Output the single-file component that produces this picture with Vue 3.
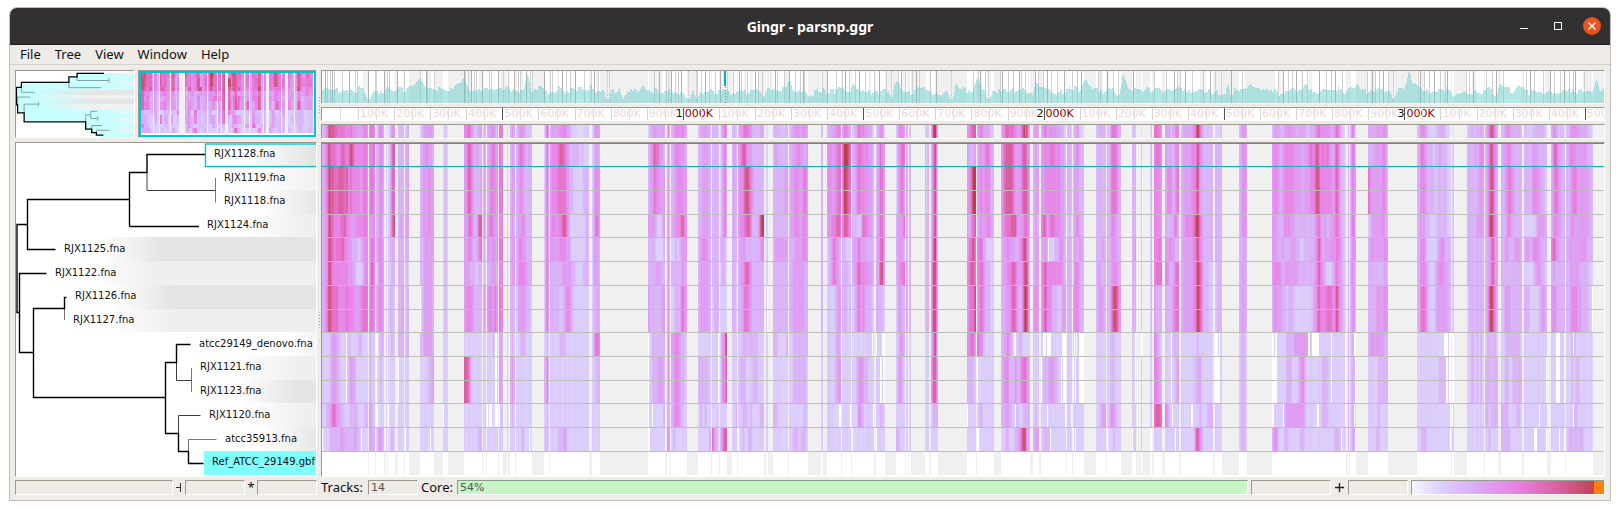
<script setup>
import { ref, onMounted } from 'vue'

const SPAN = 1282
const TRACKS = 14

// Aligned blocks: start, end, then SNP density samples (1 = sparse, 9 = dense) for
// each distinct group of tracks listed in `groups`.
const blocks = `
0 46 34586665567656875555565 34587766777675655554565 34487655566755444555565 34487656667554433323455 34487555555554443222355 34587666555565554445666 22223443322223222233222 22223443322223443222222 22334664433222333322233 12223333344333334332222
47 53 556 565 445 465 475 565 322 322 432 433
54 62 3454 3454 3453 3554 2454 3554 1233 1232 1122 2443
64 65 2 2 2 2 2 2 2 2 2 2
66 73 23577 23576 23578 23343 22333 23332 22332 12222 12222 12332
76 82 333 333 343 333 333 334 333 222 222 222
83 87 334 334 344 333 232 233 233 222 222 122
98 112 3445443 3444544 3444544 3344444 3344443 2344443 3344443 2222334 2 2
121 126 232 232 232 232 232 232 2 2 2 2
142 160 457643433 457643334 446643377 445533356 444333233 455543333 2 776322222 2 222222233
161 164 343 343 343 242 232 343 2 2 2 2
165 176 345654 346554 456544 444544 334443 455464 222321 2 112112 2
177 181 655 656 555 656 555 655 343 443 232 2
185 186 2 2 2 2 2 2 2 2 2 2
188 193 343 344 343 344 344 333 232 343 232 222
194 210 35654343 34543333 34454333 35544333 35555433 24444332 12333222 2 2 22232221
222 227 2464 2464 2464 2464 2464 2464 2232 3363 2232 2332
228 267 45556776543333323222 45556666543322222333 45545577642222222233 44444555443222222233 33333344444332222333 33333233554322222222 22222333222222222222 2 2 22223334322222222222
270 278 23443 24554 24664 24443 24443 23343 24665 22333 2 2
326 343 345766443 344655444 444432234 333322223 333344433 433333344 123333333 223334443 222222223 122222222
345 348 343 343 343 343 343 343 343 343 333 444
349 365 34555443 33455544 34455764 22323444 33333443 22333654 44554332 34554332 34554322 23222222
376 389 334443 334443 334443 345543 344443 344443 2 333332 232322 222223
390 397 3333 3333 3333 3333 3333 2333 2 2 2 6432
398 405 23464 23464 23464 33332 23332 2 24468 24557 2 34677
410 415 3443 3433 3433 3333 3332 3332 2 2 2223 2
416 442 4577544333333 4557875433333 4556775333489 3444333333345 3446764333333 3346654333333 2233333333222 2333222333222 2233323222233 1232233222222
444 446 2 2 2 2 2 2 2 2 2 2
451 466 3433333 3333344 3333333 3444444 3333333 3333333 3322223 2 3322222 2
467 486 3344554434 3445544564 3445544554 3334444554 3344444433 3344444433 2233333333 2233333332 2222222232 2233323332
499 501 3 3 3 3 3 3 2 2 2 2
505 519 4544566 4544566 4455676 2346543 2346543 2222344 2222343 2222344 2222211 2
520 529 69986 59876 57765 33222 33332 33323 2 2 2 2
530 552 34566555443 33565554443 33323665443 34464443333 34575554443 23464543332 12222222222 22345433222 22254322222 12222222222
554 563 34654 34664 34664 34674 34784 33332 2 2 22332 2
574 583 24566 24564 34446 34443 34556 24433 23443 24432 2 33222
584 586 43 43 43 33 43 43 2 2 2 2
587 589 33 33 33 33 33 33 2 2 2 2
603 607 323 323 333 333 333 333 2 2 2 2
609 616 3683 3683 3683 3793 4884 4884 3683 4774 2333 2
645 654 43334 45699 43567 46686 56776 46668 55664 33332 2 2
655 672 354456543 455455533 354445543 566432222 566533322 466533322 655322222 2 233222222 122222222
679 708 467777644457764 467777644457774 456667774445664 344544433457863 344556764446883 334446764336984 334543222332222 345533343356653 334433223223333 223322233468843
711 717 343 344 343 344 344 454 2 2 232 344
719 744 4555566555443 4455555555443 5764566555443 3443222334543 5675555555543 4675543332344 2 2333444332222 2 2333322222222
745 750 333 333 232 333 333 333 2 2 2 2
751 762 345433 344333 345433 343443 355433 455433 2 2 2 2
774 784 33333 33333 33333 33343 34333 34443 2 2 22344 2
785 799 3366643 3366643 3355433 3345433 3345543 3368864 2233222 2233222 2354322 1223222
810 814 33 33 33 34 33 33 2 2 2 2
819 820 2 2 2 2 2 2 2 2 2 2
828 830 23 23 23 23 23 23 2 2 2 2
832 840 5665 5554 5554 5565 5666 4333 5432 5543 6776 2
843 857 4343355 3554356 3333463 4454433 5533466 3333566 2222333 2222234 5422222 2
859 891 3444455585433333 3444455684333333 3455556896433333 3444445685433333 3444445697533322 3444445697533322 2222222232222222 2222222334222222 2211222223222333 2222222675322222
893 900 3333 3333 3333 3333 2333 2333 2 2 2 2
917 925 3454 3454 3454 3343 3443 3443 2332 2332 2332 2332
950 1024 4554345555544443445656865656543575332 4554345555544443444556875555554575332 4443335454433333333334564343344565332 4443343334443322333334575344445465432 4555434444444333333334575432223464432 3544433233322222222234575556665585432 2222222333344444443222222222222222222 2222222333222345322222222333222222222 2222223444444444322222222333222222222 3542223322222233222222222222222333222
1026 1027 3 3 3 3 3 3 3 3 3 3
1028 1034 3563 3554 3563 3454 3543 3453 2332 2333 2332 2343
1046 1066 3334444553 6444444553 2344444543 3444444454 3333333343 3333444454 3444444433 2222233333 2222232222 2222332222
1095 1129 34654333233433322 34554333323333322 34443322223333322 34553222223454333 34554322234554433 34665322234444433 2 22222222222333222 2 22333222222222222
1130 1132 2 2 2 2 2 2 2 2 2 2
1145 1162 333343455 333333444 333334444 333333333 333333333 233333333 223323232 223323232 2 2
1163 1176 3468654 3468743 3479754 3346744 3346744 3479753 2333332 3333333 3323333 2232222
1179 1200 34455433333 33456543333 33355433333 33443334443 33333333333 23444333333 22333333332 22332233333 33332222332 33333222222
1202 1225 333344433333 333345544332 222222344443 344345544333 222223444332 333222223443 2 2 2 2
1229 1243 3674433 3565433 3554433 5754333 3433333 4543333 2 2 2 2
1244 1271 34555444444333 33456544444433 33454444444433 34444444444333 33444443333322 33455544333322 22233222222222 22232332222222 22223322222222 23333333322222
`.trim().split('\n').map((line) => {
  const [start, end, ...samples] = line.split(' ')
  return { start: +start, end: +end, samples }
})

// Which sample group every track uses; the last track is the reference itself.
const groups = [0, 1, 1, 2, 3, 4, 5, 5, 6, 7, 7, 8, 9]

// Unaligned stretches inside blocks, per group: start:width
const holes = {
  1: '820:1', 2: '820:1', 3: '726:1', 5: '98:1 445:1 1270:1',
  6: '24:1 54:2 173:2 326:1 396:1 550:1 554:1 560:3 692:2 721:3 725:4 740:4 752:1 754:1 757:5 813:1 819:2 849:1 893:3 897:1 950:2 953:2 986:2 990:7 1009:1 1023:1 1032:2 1122:4 1127:2 1130:2 1234:4 1242:1 1251:1',
  7: '24:1 54:1 76:1 173:2 326:1 396:1 558:2 561:2 655:1 719:1 739:1 741:3 751:1 753:1 757:5 813:1 849:1 893:5 950:5 1009:1 1023:1 1033:1 1124:2 1127:2 1130:2 1224:1 1234:4 1242:1',
  8: '54:2 66:1 121:1 165:1 167:3 173:3 177:1 326:1 330:1 517:2 528:1 551:1 645:1 693:1 725:1 743:1 749:1 850:1 869:2 950:2 961:1 995:2 1023:1 1032:1 1128:1 1130:1 1217:1 1251:1',
  9: '0:1 39:1 83:1 108:1 207:1 326:2 416:1 530:1 554:1 655:2 728:1 751:1 753:1 785:1 810:1 828:2 853:1 1019:1 1033:1 1128:1 1212:3 1224:1 1237:1 1242:1'
}

const palette = [
  [255, 255, 255], [230, 224, 253], [220, 206, 251], [218, 180, 247], [222, 158, 242],
  [232, 136, 234], [229, 116, 206], [218, 96, 160], [204, 80, 112], [185, 64, 66]
]

function shade(level) {
  const v = Math.max(0, Math.min(9, level))
  const i = Math.min(8, Math.floor(v))
  const c = palette[i].map((a, k) => Math.round(a + (palette[i + 1][k] - a) * (v - i)))
  return `rgb(${c.join(',')})`
}

const noise = (n) => {
  const s = Math.sin(n * 127.1 + 11.7) * 43758.5453
  return s - Math.floor(s)
}

function buildLevels() {
  const rows = Array.from({ length: 10 }, () => new Array(SPAN).fill(-1))
  for (const b of blocks) {
    const width = b.end - b.start
    b.samples.forEach((text, g) => {
      for (let i = 0; i < width; i++) {
        const p = Math.max(0, Math.min(text.length - 1, ((i + 0.5) / width) * text.length - 0.5))
        const a = Math.floor(p)
        const z = Math.min(text.length - 1, a + 1)
        const v = +text[a] + (text[z] - text[a]) * (p - a)
        rows[g][b.start + i] = Math.max(1.6, v + (noise(b.start + i) - 0.5) * 0.4)
      }
    })
  }
  for (const [g, list] of Object.entries(holes)) {
    for (const item of list.split(' ')) {
      const [x, w] = item.split(':').map(Number)
      for (let i = x; i < x + w; i++) rows[g][i] = 0
    }
  }
  return rows
}

const levels = buildLevels()
const inBlock = Array.from({ length: SPAN }, (_, x) => blocks.some((b) => x >= b.start && x < b.end))

const heat = ref(null)
const strip = ref(null)
const thumb = ref(null)
const density = ref(null)

function paintHeat(canvas) {
  const c = canvas.getContext('2d')
  const pitch = 332 / TRACKS
  c.fillStyle = '#f0f0f0'
  c.fillRect(0, 0, SPAN, 333)
  groups.forEach((g, row) => {
    const y = Math.floor(row * pitch)
    for (let x = 0; x < SPAN; x++) {
      if (levels[g][x] < 0) continue
      c.fillStyle = shade(levels[g][x])
      c.fillRect(x, y, 1, 24)
    }
  })
  c.fillStyle = '#fff'
  for (let x = 0; x < SPAN; x++) if (inBlock[x]) c.fillRect(x, 308, 1, 25)
  c.fillRect(0, 332, SPAN, 1)
  c.fillStyle = '#bdbdbd'
  for (let i = 2; i < TRACKS; i++) c.fillRect(0, Math.floor(i * pitch), SPAN, 1)
  c.fillStyle = '#00b9b9'
  c.fillRect(0, 0, SPAN, 1)
  c.fillRect(0, 23, SPAN, 1)
}

function paintStrip(canvas) {
  const c = canvas.getContext('2d')
  c.fillStyle = '#f0f0f0'
  c.fillRect(0, 0, SPAN, 13)
  for (let x = 0; x < SPAN; x++) {
    if (!inBlock[x]) continue
    const mean = groups.reduce((sum, g) => sum + Math.max(0, levels[g][x]), 0) / groups.length
    c.fillStyle = shade(mean * 1.6 - 1.6)
    c.fillRect(x, 0, 1, 13)
  }
  c.fillStyle = '#ff8000'
  c.fillRect(703, 0, 1, 13)
}

function paintThumb(canvas) {
  const c = canvas.getContext('2d')
  c.fillStyle = '#fff'
  c.fillRect(0, 0, 173, 62)
  for (let x = 0; x < 173; x++) {
    const from = Math.floor((x * SPAN) / 173)
    const to = Math.floor(((x + 1) * SPAN) / 173)
    if (!inBlock.slice(from, to).some(Boolean)) {
      c.fillStyle = '#f0f0f0'
      c.fillRect(x, 0, 1, 62)
      continue
    }
    groups.forEach((g, row) => {
      const part = levels[g].slice(Math.max(0, from - 6), to + 6).filter((v) => v > 0)
      const mean = part.length ? part.reduce((a, b) => a + b, 0) / part.length : 2
      const top = part.length ? Math.max(...part) : 2
      const y = Math.round((row * 60) / 13)
      c.fillStyle = shade((mean + top) / 2 + (row < 4 ? 0.9 : 0))
      c.fillRect(x, y, 1, Math.round(((row + 1) * 60) / 13) - y)
    })
  }
}

const edges = [
  3, 5, 8, 10, 12, 20, 27, 33, 35, 46, 53, 54, 62, 65, 67, 75, 82, 98, 104, 105, 112, 142, 143, 146, 149, 152, 154, 160, 167, 169,
  176, 181, 186, 192, 196, 198, 204, 208, 210, 222, 228, 230, 240, 244, 248, 253, 262, 269, 272, 276, 332, 337, 344, 346, 349,
  353, 356, 359, 375, 379, 383, 387, 393, 398, 405, 411, 417, 419, 425, 433, 436, 440, 453, 455, 462, 467, 473, 478, 481, 482,
  500, 505, 514, 520, 523, 527, 533, 537, 543, 552, 557, 564, 576, 579, 583, 590, 594, 597, 608, 614, 651, 656, 658, 663, 678,
  680, 686, 691, 697, 699, 703, 713, 716, 721, 725, 729, 735, 742, 750, 755, 759, 776, 778, 785, 791, 796, 811, 832, 844, 852,
  855, 858, 863, 870, 881, 888, 893, 899, 909, 920, 956, 961, 966, 970, 974, 980, 985, 997, 1004, 1009, 1013, 1020, 1045, 1050,
  1053, 1057, 1061, 1066, 1096, 1098, 1102, 1107, 1112, 1118, 1123, 1125, 1144, 1147, 1151, 1164, 1170, 1174, 1181, 1204, 1208,
  1212, 1221, 1228, 1232, 1238, 1242, 1247, 1251, 1253, 1262
]
const breaks = [285, 287, 366, 374, 569, 629, 666, 1071]

// Notable peaks and dips of the density curve: position, height, half width.
const features = [
  [97, 24, 8], [88, 18, 5], [141, 25, 6], [136, 20, 4], [205, 28, 4], [185, 18, 4], [321, 18, 4], [467, 24, 3], [531, 20, 3], [575, 22, 6],
  [634, 20, 3], [655, 25, 5], [714, 20, 3], [763, 24, 6], [801, 28, 5], [906, 19, 3], [928, 19, 5], [983, 19, 4], [1035, 19, 4],
  [1087, 32, 5], [1093, 20, 6], [1178, 19, 4], [1196, 18, 4], [1274, 23, 4], [285, 2, 4], [366, 3, 5], [374, 4, 4], [569, 4, 3],
  [629, 2, 4], [666, 3, 4], [46, 3, 5], [301, 4, 4], [1071, 3, 4], [441, 6, 4], [486, 6, 4], [1131, 6, 4], [795, 7, 5], [909, 6, 3]
]

function paintDensity(canvas) {
  const c = canvas.getContext('2d')
  c.fillStyle = '#f0f0f0'
  c.fillRect(0, 0, SPAN, 32)
  c.fillStyle = '#fff'
  for (const b of blocks) c.fillRect(b.start, 0, b.end - b.start, 32)
  c.fillStyle = 'rgba(240,240,240,0.9)'
  for (let i = 0; i < 90; i++) {
    c.fillRect(Math.floor(noise(i) * SPAN), 0, 1 + Math.floor(noise(i + 300) * 5), 32)
  }
  edges.forEach((x, i) => {
    c.fillStyle = i % 3 ? '#d0d0d0' : '#b0b0b0'
    c.fillRect(x, 0, 1, 32)
  })
  c.fillStyle = '#b8b8b8'
  for (const x of breaks) for (let y = 0; y < 32; y += 2) c.fillRect(x, y, 1, 1)
  for (let x = 0; x < SPAN; x++) {
    const coarse = noise(Math.floor(x / 9)) * 5
    const mid = noise(Math.floor(x / 4) + 50) * 5
    let h = 6 + coarse + mid + noise(Math.floor(x / 2) + 900) * 3
    for (const [at, height, half] of features) {
      const k = 1 - Math.abs(x - at) / half
      if (k > 0) h += (height - h) * Math.min(1, k * 1.1)
    }
    c.fillStyle = 'rgba(104,205,201,0.5)'
    c.fillRect(x, 32 - Math.round(h), 1, Math.round(h))
  }
  c.fillStyle = '#00b4b4'
  c.fillRect(402, 0, 2, 15)
  c.fillStyle = '#5f8f8f'
  for (let y = 16; y < 32; y += 3) c.fillRect(403, y, 1, 1)
}

onMounted(() => {
  paintHeat(heat.value)
  paintStrip(strip.value)
  paintThumb(thumb.value)
  paintDensity(density.value)
})

const kilobase = 36.08
const ticks = Array.from({ length: 35 }, (_, i) => {
  const n = i + 1
  return {
    n,
    left: `${((n * kilobase) / SPAN) * 100}%`,
    mega: n % 10 === 0 ? n / 10 : 0,
    dark: n % 5 === 0,
    label: n % 10 === 0 ? '000K' : `${n % 10}00K`
  }
})
const halves = Array.from({ length: 35 }, (_, i) => `${(((i + 0.5) * kilobase) / SPAN) * 100}%`)

const pitch = 332 / TRACKS
const leaves = [
  ['RJX1128.fna', 198], ['RJX1119.fna', 208], ['RJX1118.fna', 208], ['RJX1124.fna', 191], ['RJX1125.fna', 48],
  ['RJX1122.fna', 39], ['RJX1126.fna', 59], ['RJX1127.fna', 57], ['atcc29149_denovo.fna', 183], ['RJX1121.fna', 184],
  ['RJX1123.fna', 184], ['RJX1120.fna', 193], ['atcc35913.fna', 209], ['Ref_ATCC_29149.gbf', 196]
].map(([name, x], i) => ({
  name,
  x,
  y: Math.floor(i * pitch),
  baseline: Math.round(i * pitch) + 14,
  fade: x + (name.length > 15 ? 92 : 36),
  tone: i % 2 ? '#efefef' : '#e4e4e4'
}))

const thick = 'M189 11.5H131V30 M113.5 83.5V29.5H131 M183 83.5H113.5 M113.5 56.5H11.5V106.5H39.5 M11.5 81.5H1V169.5H3.5 M30.5 130.5H3.5V209.5H17.5 M50.5 154.5H48.5V165.5H17.5V254.5H149.5 M174.5 201.5H160.5V219.5H149.5V290.5H162.5V308.5H172.5V320.5H187.5'
const thin = 'M131 29V47.5H199.5 M160.5 219V237.5H175.5 M162.5 290V272.5H184.5'
const faint = 'M199.5 35V59.5 M48.5 165V177 M175.5 225V249 M172.5 308V296.5H200.5'
const trunk = 'M189 11.5H131V29.5H113.5V56.5H11.5V81.5H1V169.5H3.5V209.5H17.5V254.5H149.5V290.5H162.5V308.5H172.5V320.5H187.5'
const twigs = thin + faint + 'M113.5 56.5V83.5H183 M11.5 81.5V106.5H39.5 M3.5 169.5V130.5H30.5 M17.5 209.5V165.5H48.5V154.5 M149.5 254.5V219.5H160.5V201.5H174.5'
const menus = ['File', 'Tree', 'View', 'Window', 'Help']
</script>

<template>
  <div class="desktop">
    <main class="window">
      <header class="titlebar">
        <h1>Gingr - parsnp.ggr</h1>
        <div class="controls">
          <button type="button" aria-label="Minimize"><svg viewBox="0 0 18 18"><path d="M5 11.5H13" stroke="#fff" /></svg></button>
          <button type="button" aria-label="Maximize"><svg viewBox="0 0 18 18"><rect x="5.5" y="5.5" width="7" height="7" fill="none" stroke="#fff" /></svg></button>
          <button type="button" aria-label="Close"><svg viewBox="0 0 18 18"><circle cx="9" cy="9" r="9" fill="#e95420" /><path d="M5.5 5.5L12.5 12.5M12.5 5.5L5.5 12.5" stroke="#fff" stroke-width="1.4" /></svg></button>
        </div>
      </header>
      <nav class="menubar">
        <button v-for="m in menus" :key="m" type="button">{{ m }}</button>
      </nav>

      <section class="workspace">
        <div class="thumbs">
          <div class="panel tree-thumb">
            <svg viewBox="0 0 118 66" preserveAspectRatio="none">
              <defs>
                <linearGradient id="grayFade"><stop offset="0" stop-color="#e6e6e6" stop-opacity="0" /><stop offset="0.6" stop-color="#e6e6e6" /></linearGradient>
                <linearGradient id="paleGrayFade"><stop offset="0" stop-color="#f0f0f0" stop-opacity="0" /><stop offset="0.6" stop-color="#f0f0f0" /></linearGradient>
                <linearGradient id="paleFade"><stop offset="0" stop-color="#f0f0f0" stop-opacity="0" /><stop offset="1" stop-color="#f0f4f4" stop-opacity="0.8" /></linearGradient>
              </defs>
              <path d="M1 16H5V10H54V6H61V2H118V66H82V63H76V59H69V50H9V42H2Z" fill="#c8ffff" />
              <rect v-for="i in 7" :key="i" x="88" :y="(i * 2 - 2) * 4.7" width="30" height="4.7" fill="url(#paleFade)" />
              <rect x="14" y="19" width="104" height="5" fill="url(#grayFade)" />
              <rect x="14" y="24" width="104" height="5" fill="url(#paleGrayFade)" />
              <rect x="20" y="28" width="98" height="5" fill="url(#grayFade)" />
              <rect x="20" y="33" width="98" height="5" fill="url(#paleGrayFade)" />
              <g fill="none" class="mini">
                <path :d="twigs" stroke="#7fa3a3" />
                <path :d="trunk" stroke="#000" stroke-width="1.3" />
              </g>
            </svg>
          </div>
          <div class="panel heat-thumb"><canvas ref="thumb" width="173" height="62"></canvas></div>
        </div>
        <div class="splitter"><i></i></div>
        <div class="tracks-head">
          <div class="panel density"><canvas ref="density" width="1282" height="32"></canvas></div>
          <div class="panel ruler">
            <template v-for="t in ticks" :key="t.n">
              <span class="tick" :class="{ dark: t.dark }" :style="{ left: t.left }"></span>
              <span v-if="t.mega" class="mega" :style="{ left: t.left }">{{ t.mega }}</span>
              <span class="label" :class="{ red: t.mega }" :style="{ left: t.left }">{{ t.label }}</span>
            </template>
            <span v-for="h in halves" :key="h" class="tick half" :style="{ left: h }"></span>
          </div>
          <div class="panel strip"><canvas ref="strip" width="1282" height="13"></canvas></div>
        </div>

        <div class="panel tree">
          <svg viewBox="0 0 300 333" preserveAspectRatio="xMinYMin meet">
            <defs>
              <linearGradient v-for="(l, i) in leaves" :id="'row' + i" :key="i" gradientUnits="userSpaceOnUse" :x1="l.fade" :x2="l.fade + 62" y1="0" y2="0">
                <stop offset="0" stop-color="#fff" /><stop offset="1" :stop-color="l.tone" />
              </linearGradient>
            </defs>
            <rect v-for="(l, i) in leaves" :key="l.name" x="0" :y="l.y" width="300" height="24" :fill="`url(#row${i})`" />
            <rect x="0" y="332" width="300" height="1" fill="#fff" />
            <rect x="188" y="308" width="112" height="24" fill="#80ffff" />
            <rect x="189.5" y="1" width="114" height="22.5" fill="none" stroke="#9be8e8" stroke-width="2" />
            <rect x="189.5" y="1" width="114" height="22.5" fill="none" stroke="#00c4c4" />
            <g fill="none">
              <path :d="faint" stroke="#777" />
              <path :d="thin" stroke="#3c3c3c" />
              <path :d="thick" stroke="#000" stroke-width="1.4" />
            </g>
            <text v-for="l in leaves" :key="l.name" :x="l.x" :y="l.baseline">{{ l.name }}</text>
          </svg>
        </div>
        <div class="splitter low"><i></i></div>
        <div class="panel heat"><canvas ref="heat" width="1282" height="333"></canvas></div>
      </section>

      <footer class="status">
        <input class="field wide" readonly aria-label="Selected track">
        <span class="sign"><svg width="6" height="9" viewBox="0 0 6 9"><path d="M4.5 0V9M0 4.5H4" stroke="#333" fill="none" /></svg></span>
        <input class="field" readonly aria-label="Branch length">
        <span class="sign">*</span>
        <input class="field" readonly aria-label="Branch support">
        <label class="caption tracks" for="trackCount">Tracks:</label>
        <input id="trackCount" class="field count" readonly value="14">
        <label class="caption core" for="coreShare">Core:</label>
        <input id="coreShare" class="field share" readonly value="54%">
        <input class="field position" readonly aria-label="Position">
        <span class="sign plus"><svg width="9" height="9" viewBox="0 0 9 9"><path d="M4.5 0V9M0 4.5H9" stroke="#222" stroke-width="1.3" /></svg></span>
        <input class="field" readonly aria-label="Offset">
        <div class="field legend"><span></span></div>
      </footer>
    </main>
  </div>
</template>

<style>
body {
  background: #fff;
}
</style>

<style scoped>
.desktop {
  box-sizing: border-box;
  height: 100vh;
  min-height: 400px;
  padding: 7px 9px 9px;
  font-family: "Noto Sans", "DejaVu Sans", sans-serif;
  font-size: 13px;
  color: #111;
}
.window {
  box-sizing: border-box;
  height: 100%;
  display: flex;
  flex-direction: column;
  background: #efebe7;
  border: 1px solid #bdbdbd;
  border-radius: 8px 8px 0 0;
  overflow: hidden;
}
button {
  border: 0;
  padding: 0;
  background: none;
  font: inherit;
  color: inherit;
}
.titlebar {
  box-sizing: border-box;
  flex: none;
  height: 37px;
  display: grid;
  grid-template-columns: 1fr auto 1fr;
  align-items: center;
  padding: 0 9px;
  background: #333031;
  border-bottom: 1px solid #1e1c1d;
  color: #fff;
}
.titlebar h1 {
  grid-column: 2;
  margin: 0;
  font-size: 14px;
  line-height: 19px;
  font-weight: 700;
}
.controls {
  display: flex;
  justify-content: flex-end;
  gap: 16px;
}
.controls button {
  width: 18px;
  height: 18px;
}
.controls svg {
  display: block;
}
.menubar {
  box-sizing: border-box;
  flex: none;
  height: 20px;
  display: flex;
  align-items: flex-start;
  padding-left: 3px;
  border-bottom: 1px solid #d5d1cc;
}
.menubar button {
  padding: 0 7px;
  line-height: 18px;
}
.workspace {
  flex: 1;
  min-height: 0;
  display: grid;
  grid-template-columns: 302px 4px minmax(0, 1fr);
  grid-template-rows: auto minmax(0, 1fr);
  row-gap: 3px;
  padding: 5px 5px 3px;
}
.panel {
  box-sizing: border-box;
  border: 1px solid #fff;
  border-top-color: #9c9893;
  border-left-color: #9c9893;
  background: #fff;
  overflow: hidden;
}
.panel canvas,
.panel svg {
  display: block;
  width: 100%;
  height: 100%;
}
.thumbs {
  display: flex;
  gap: 3px;
  min-height: 0;
  padding-bottom: 1px;
}
.tree-thumb {
  width: 120px;
}
.mini {
  transform: scale(0.466, 0.2);
}
.mini path {
  vector-effect: non-scaling-stroke;
}
.heat-thumb {
  flex: 1;
}
.heat-thumb canvas {
  box-sizing: border-box;
  border: 2px solid #00c8d0;
}
.splitter {
  display: flex;
  align-items: center;
  justify-content: center;
}
.splitter i {
  width: 1px;
  height: 16px;
  background: repeating-linear-gradient(#aaa 0 1px, transparent 1px 3px);
}
.splitter.low {
  padding-top: 20px;
}
.tracks-head {
  display: flex;
  flex-direction: column;
  gap: 3px;
}
.density {
  height: 34px;
}
.ruler {
  position: relative;
  height: 14px;
  font: 11px/12px "DejaVu Sans", sans-serif;
}
.ruler span {
  position: absolute;
  top: 0;
}
.tick {
  width: 1px;
  height: 12px;
  background: #d4d4d4;
}
.tick.dark {
  background: #555;
}
.tick.half {
  background: #e6dede;
}
.label {
  padding-left: 2px;
  color: #ecd8d8;
}
.label.red {
  color: #8b0000;
}
.mega {
  transform: translateX(-100%);
}
.strip {
  height: 15px;
}
.tree text {
  font: 10px "DejaVu Sans", sans-serif;
  fill: #111;
}
.status {
  flex: none;
  display: flex;
  align-items: center;
  padding: 0 5px 5px;
  height: 15px;
}
.field {
  box-sizing: border-box;
  flex: none;
  width: 60px;
  height: 15px;
  margin: 0;
  padding: 0 2px;
  border: 1px solid #fff;
  border-top-color: #9c9893;
  border-left-color: #9c9893;
  border-radius: 0;
  background: #eeeae6;
  font: 11px/13px "DejaVu Sans", sans-serif;
  color: #555;
  outline: 0;
}
.field.wide {
  width: 158px;
}
.field.count {
  width: 50px;
}
.field.share {
  flex: 1;
  min-width: 60px;
  background: #c8f4c8;
  border-top-color: #84a084;
  border-left-color: #84a084;
}
.field.position {
  width: 80px;
  margin-left: 3px;
}
.sign {
  flex: none;
  width: 12px;
  display: flex;
  justify-content: center;
  font-size: 13px;
  line-height: 15px;
}
.sign.plus {
  width: 17px;
}
.caption {
  flex: none;
  line-height: 15px;
}
.caption.tracks {
  width: 47px;
  margin-left: 4px;
}
.caption.core {
  width: 36px;
  margin-left: 3px;
}
.legend {
  display: flex;
  width: 194px;
  margin-left: 3px;
  padding: 0;
  background: linear-gradient(90deg, #f6f4ff, #dccffb 15%, #d9aef6 32%, #ea84ea 52%, #da60a0 76%, #b83c40);
}
.legend span {
  width: 10px;
  margin-left: auto;
  background: #ff8000;
}
</style>
